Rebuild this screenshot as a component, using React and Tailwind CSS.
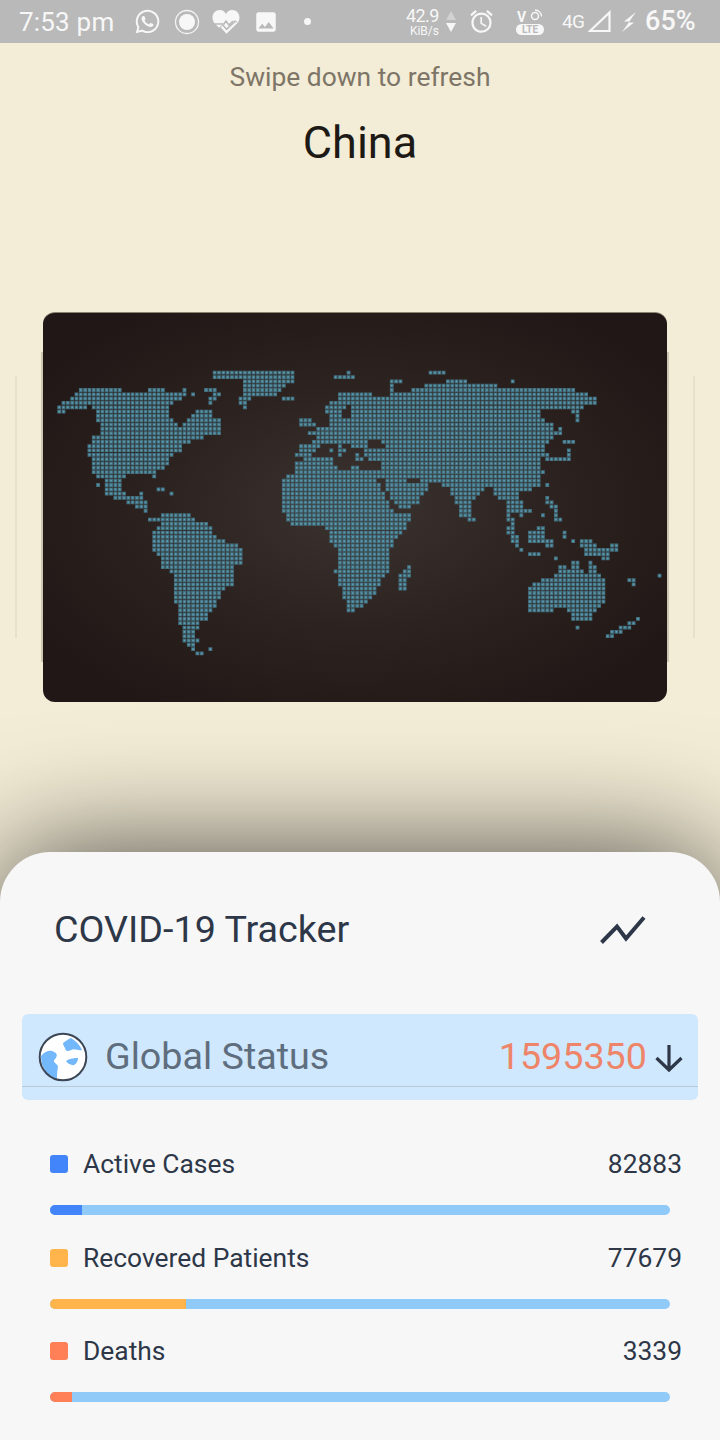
import React from 'react';
import { FaWhatsapp } from 'react-icons/fa';
import { MdImage, MdOutlineAccessAlarm } from 'react-icons/md';

const PITCH = 4.33;
const GRID_X = 210;
const GRID_Y = 649;

// outlines traced from crops: [crop x, crop y, points at 3x]
const LAND = [
  // north america
  [0, 300, '175,310 200,295 240,265 355,265 365,270 435,270 460,265 475,255 495,255 500,270 545,270 555,265 560,290 520,305 500,320 500,330 525,370 545,380 550,360 570,350 590,320 610,320 640,335 640,350 660,360 660,405 640,405 610,400 610,420 560,425 545,445 505,480 495,510 470,515 470,535 455,535 455,515 430,525 375,525 360,570 405,590 415,570 430,565 430,590 445,610 445,645 395,612 345,595 320,590 305,535 280,530 275,510 265,465 255,455 265,440 275,410 295,400 290,325 260,318 235,325 200,330 175,345'],
  // central and south america
  [0, 500, '445,45 455,55 490,40 570,40 590,60 625,70 650,110 680,125 715,132 730,150 725,185 705,200 705,250 665,270 650,320 630,335 625,350 595,375 585,400 595,425 580,445 610,455 610,467 590,467 550,425 550,380 535,370 535,320 520,300 520,225 485,200 475,175 458,150 458,95 480,70 445,65 430,45'],
  // greenland
  [0, 300, '640,215 665,205 725,210 805,205 880,205 880,240 855,260 830,280 780,290 750,290 745,315 735,330 720,315 720,285 730,270 725,240 680,235 645,238'],
  [0, 300, '600,258 635,258 660,270 660,292 637,300 637,316 620,316 615,295 640,285 630,270 600,266'],
  // eurasia, west half
  [270, 370, '80,240 90,215 115,215 120,225 140,195 115,195 115,185 140,175 180,160 180,130 165,120 165,100 190,95 215,60 305,60 315,75 330,72 395,68 395,58 420,58 430,45 450,48 495,40 530,35 535,20 585,20 590,40 630,42 685,45 690,55 730,55 730,45 760,45 765,55 920,55 925,70 960,70 960,80 985,85 970,105 945,108 945,120 900,122 820,122 820,148 845,150 850,165 880,175 880,195 855,195 845,215 818,240 815,290 830,310 815,320 815,340 785,360 750,370 765,420 780,425 760,430 735,425 720,420 705,395 680,385 665,355 640,355 615,380 600,395 600,440 575,440 565,410 550,375 530,345 475,340 465,370 445,395 405,415 385,415 360,385 345,345 335,315 332,272 280,262 280,235 270,235 250,240 235,218 190,215 140,232 125,262 85,262 75,245'],
  // africa
  [270, 370, '75,280 100,265 185,265 190,280 215,300 240,290 265,290 275,300 330,300 330,345 360,405 385,430 430,432 420,455 370,520 360,555 365,600 340,620 310,680 280,715 230,725 225,690 215,685 205,620 190,605 205,600 200,540 180,520 180,490 150,465 60,465 40,430 25,400 35,395 35,340 50,315 70,310'],
  [270, 370, '385,620 410,590 418,590 418,620 405,630 405,660 385,660'],
  [270, 370, '85,150 115,140 130,150 137,170 85,170'],
  // indonesia, new guinea, australia
  [360, 500, '435,80 460,70 470,100 485,125 483,147 465,140 450,105 435,100'],
  [360, 500, '510,95 550,75 560,110 585,120 587,142 565,140 550,125 510,128'],
  [360, 500, '640,120 655,125 665,118 690,118 715,135 745,155 757,182 730,182 725,165 680,165 678,140 655,135'],
  [360, 500, '510,260 545,240 580,225 605,195 625,205 640,185 665,185 662,210 685,215 692,183 705,185 718,220 730,230 745,265 740,300 710,330 690,362 640,362 640,335 615,325 545,337 510,337'],
];

const HOLES = [
  [270, 370, '215,125 235,95 245,120 250,147 215,147'],
  [270, 370, '290,200 300,212 330,210 357,237 320,227 295,227'],
  [270, 370, '410,305 420,325 447,330 447,342 420,342 405,325'],
  [270, 370, '320,318 335,325 345,360 382,402 360,402 345,375 330,345'],
  [460, 370, '288,173 298,173 298,185 288,185'],
];

// thin islands, snapped to the grid along the line
const STROKES = [
  [270, 370, '36,89 70,89'],
  [270, 370, '205,25 248,25 240,10'],
  [270, 370, '390,38 372,38 372,52'],
  [270, 370, '488,12 518,12'],
  [270, 370, '180,243 180,243'],
  [270, 370, '207,232 220,243 207,257'],
  [270, 370, '258,255 272,268'],
  [0, 300, '850,299 878,299'],
  [0, 300, '1012,235 1058,235 1050,220'],
  [0, 300, '475,568 492,568'],
  [0, 300, '514,582 514,582'],
  [0, 300, '296,557 296,557'],
  [0, 300, '578,285 578,285'],
  [0, 500, '630,447 630,447'],
  [460, 370, '318,218 338,218'],
  [460, 370, '334,240 334,268 305,270'],
  [460, 370, '255,245 268,268 285,270'],
  [460, 370, '335,128 350,125 352,155'],
  [460, 370, '258,347 258,347'],
  [460, 370, '268,382 272,400 283,412 295,425 285,436 300,450'],
  [460, 370, '165,35 165,35'],
  [460, 370, '36,450 36,450'],
  [460, 370, '140,425 150,450 165,465'],
  [460, 370, '180,437 180,437'],
  [460, 370, '205,423 205,423'],
  [360, 500, '490,150 490,150'],
  [360, 500, '515,161 532,161'],
  [360, 500, '555,45 555,45'],
  [360, 500, '619,95 619,112'],
  [360, 500, '645,122 645,122'],
  [360, 500, '748,150 762,135 772,150'],
  [360, 500, '593,175 593,175'],
  [360, 500, '658,380 658,380'],
  [360, 500, '812,238 823,253'],
  [360, 500, '901,227 901,227'],
  [360, 500, '838,354 825,368 798,380 785,393 770,395 750,407'],
  [360, 500, '335,60 335,60'],
];

const toPage = ([ox, oy, pts]) =>
  pts.split(' ').map((p) => {
    const [x, y] = p.split(',').map(Number);
    return [ox + x / 3, oy + y / 3];
  });

const inside = (poly, x, y) => {
  let hit = false;
  for (let i = 0, j = poly.length - 1; i < poly.length; j = i++) {
    const [xi, yi] = poly[i];
    const [xj, yj] = poly[j];
    if (yi > y !== yj > y && x < ((xj - xi) * (y - yi)) / (yj - yi) + xi) hit = !hit;
  }
  return hit;
};

const buildMap = () => {
  const land = LAND.map(toPage);
  const holes = HOLES.map(toPage);
  const cells = new Set();
  for (let i = -40; i < 110; i++) {
    for (let j = -80; j < 5; j++) {
      const x = GRID_X + i * PITCH;
      const y = GRID_Y + j * PITCH;
      if (land.some((p) => inside(p, x, y)) && !holes.some((p) => inside(p, x, y))) {
        cells.add(`${i},${j}`);
      }
    }
  }
  STROKES.map(toPage).forEach((line) => {
    line.forEach(([x, y], n) => {
      const [nx, ny] = line[n + 1] || [x, y];
      for (let t = 0; t <= 1; t += 0.1) {
        const i = Math.round((x + (nx - x) * t - GRID_X) / PITCH);
        const j = Math.round((y + (ny - y) * t - GRID_Y) / PITCH);
        cells.add(`${i},${j}`);
      }
    });
  });
  let base = '';
  let glow = '';
  cells.forEach((key) => {
    const [i, j] = key.split(',').map(Number);
    const x = GRID_X + i * PITCH;
    const y = GRID_Y + j * PITCH;
    base += `M${(x - 1.9).toFixed(2)} ${(y - 1.9).toFixed(2)}h3.8v3.8h-3.8z`;
    glow += `M${(x - 0.8).toFixed(2)} ${(y - 0.8).toFixed(2)}h1.6v1.6h-1.6z`;
  });
  return { base, glow };
};

const mapPaths = buildMap();

const WorldMap = () => (
  <svg viewBox="43 312 624 390" className="absolute inset-0 h-full w-full">
    <path d={mapPaths.base} fill="#44707f" />
    <path d={mapPaths.glow} fill="#5a9fb5" />
  </svg>
);

const RecordIcon = () => (
  <svg width="26" height="26" viewBox="0 0 26 26" className="ml-[13px]">
    <circle cx="13" cy="13" r="11.5" fill="none" stroke="#f4f4f4" strokeWidth="1.3" />
    <circle cx="13" cy="13" r="8" fill="#f7f7f7" />
  </svg>
);

const HeartIcon = () => (
  <svg width="28" height="26" viewBox="0 0 28 26" className="ml-[12px]">
    <path d="M14 25 L3 15 C-2 9 1 1 8 1 C11 1 13 3 14 5 C15 3 17 1 20 1 C27 1 30 9 25 15 Z" fill="#f7f7f7" />
    <path d="M2 15 L12 15 L14 12 L17 16 L21 12" fill="none" stroke="#b9b9b9" strokeWidth="1.500" />
    <path d="M9 17 L14.500 23 L25 13" fill="none" stroke="#b9b9b9" strokeWidth="5.500" />
    <path d="M9.500 17.500 L14.500 23 L24.500 13.500" fill="none" stroke="#f7f7f7" strokeWidth="2.400" />
  </svg>
);

const VoLteIcon = () => (
  <svg width="30" height="28" viewBox="0 0 30 28" className="ml-[20px]">
    <rect x="1" y="16" width="28" height="11" rx="5.500" fill="#f7f7f7" />
    <text x="15" y="25" textAnchor="middle" fontSize="10" fontWeight="700" fontFamily="Roboto, sans-serif" fill="#b9b9b9">LTE</text>
    <text x="2" y="14" fontSize="14" fontWeight="700" fontFamily="Roboto, sans-serif" fill="#f7f7f7">V</text>
    <circle cx="20" cy="8" r="3.500" fill="none" stroke="#f7f7f7" strokeWidth="1.500" />
    <path d="M20 2 A6.500 6.500 0 0 1 26.500 8.500" fill="none" stroke="#f7f7f7" strokeWidth="1.300" />
  </svg>
);

const StatusBar = () => (
  <div className="flex h-[43px] items-center bg-[#b9b9b9] pl-[19px] font-['Roboto',sans-serif] text-[#f7f7f7]">
    <span className="mt-[1px] w-[96px] text-[26px] leading-none tracking-[0.2px] whitespace-nowrap">7:53 pm</span>
    <FaWhatsapp size={27} className="ml-[19px]" />
    <RecordIcon />
    <HeartIcon />
    <MdImage size={26} className="ml-[13px]" />
    <span className="ml-[25px] h-[7px] w-[7px] rounded-full bg-[#f7f7f7]" />
    <div className="ml-[94px] flex w-[34px] flex-col items-end">
      <span className="text-[18px] leading-[18px] tracking-[-0.5px]">42.9</span>
      <span className="text-[12px] leading-[12px]">KiB/s</span>
    </div>
    <div className="ml-[7px] flex flex-col gap-[3px]">
      <span className="h-0 w-0 border-x-[5px] border-b-[9px] border-x-transparent border-b-[#d2d2d2]" />
      <span className="h-0 w-0 border-x-[5px] border-t-[9px] border-x-transparent border-t-[#f7f7f7]" />
    </div>
    <MdOutlineAccessAlarm size={27} className="ml-[12px]" />
    <VoLteIcon />
    <span className="ml-[17px] text-[19px] leading-none tracking-[-0.8px]">4G</span>
    <svg width="24" height="24" viewBox="0 0 24 24" className="ml-[4px]">
      <path d="M2 21 L21.500 2.500 V21 Z" fill="none" stroke="#f7f7f7" strokeWidth="2.200" />
    </svg>
    <svg width="16" height="22" viewBox="0 0 16 22" className="ml-[9px]">
      <path d="M15 1 L3 10.500 H8.500 L1 21 L13 11.500 H7.500 Z" fill="#f7f7f7" />
    </svg>
    <span className="ml-[8px] text-[27px] leading-none font-medium">65%</span>
  </div>
);

const Globe = () => (
  <svg width="50" height="50" viewBox="0 0 50 50">
    <circle cx="25" cy="25" r="23.300" fill="#fff" />
    <path d="M3 24 C8 18 13 18 16 20 C19 21 20 24 17 27 C14 30 18 31 20 34 C19 40 19 44 19 47 C10 45 3 36 3 24 Z" fill="#72b8fb" />
    <path d="M25 11 C28 9 30 7 33 6 C38 9 42 13 44 18 C40 19 37 16 33 18 C30 20 27 19 27 16 C26 14 25 13 25 11 Z" fill="#72b8fb" />
    <path d="M28 29 C32 26 37 26 40 26 C40 30 37 34 34 33 C31 32 29 31 28 29 Z" fill="#72b8fb" />
    <circle cx="25" cy="25" r="23.300" fill="none" stroke="#3d4654" strokeWidth="2" />
  </svg>
);

const stats = [
  { label: 'Active Cases', value: '82883', color: 'bg-[#4285fb]', fill: 'w-[32px]', gap: 'mt-[50px]' },
  { label: 'Recovered Patients', value: '77679', color: 'bg-[#ffb44c]', fill: 'w-[136px]', gap: 'mt-[29px]' },
  { label: 'Deaths', value: '3339', color: 'bg-[#ff7f57]', fill: 'w-[22px]', gap: 'mt-[28px]' },
];

const StatRow = ({ label, value, color, fill, gap }) => (
  <div className={gap}>
    <div className="flex h-[28px] items-center pl-[50px] pr-[38px]">
      <span className={`h-[18px] w-[18px] rounded-[3px] ${color}`} />
      <span className="ml-[15px] flex-1 text-[26.400px] leading-none text-[#2d3748]">{label}</span>
      <span className="text-[26.400px] leading-none text-[#2d3748]">{value}</span>
    </div>
    <div className="mx-[50px] mt-[27px] h-[10px] overflow-hidden rounded-full bg-[#90caf9]">
      <div className={`h-full ${color} ${fill}`} />
    </div>
  </div>
);

const App = () => {
  return (
    <div className="flex h-[1440px] w-[720px] flex-col overflow-hidden bg-[#f3ecd6] font-['Roboto',sans-serif]">
      <StatusBar />
      <p className="mt-[19px] text-center text-[26.400px] leading-[30px] text-[#7d7567]">Swipe down to refresh</p>
      <h1 className="mt-[24px] text-center text-[45px] leading-[54px] text-[#1d1a16]">China</h1>

      <div className="mt-[142px] ml-[15px] flex items-center gap-[26px]">
        <div className="h-[262px] w-[2px] bg-[#e6e0cc]" />
        <div className="relative h-[390px] w-[624px]">
          <div className="absolute -inset-x-[2px] inset-y-[40px] bg-[#cdc6b0]" />
          <div className="absolute inset-0 overflow-hidden rounded-[12px] border-t border-[#8d8270] bg-[radial-gradient(ellipse_at_center,#3b332f_0%,#2c2320_45%,#211716_85%)]">
            <WorldMap />
          </div>
        </div>
        <div className="h-[262px] w-[2px] bg-[#e6e0cc]" />
      </div>

      <div className="mt-[150px] flex-1 rounded-t-[50px] bg-[#f7f7f7] shadow-[0_0_120px_rgba(0,0,0,0.7)]">
        <div className="flex h-[156px] items-center pl-[54px] pr-[74px]">
          <h2 className="flex-1 text-[37.700px] leading-none text-[#2d3748]">COVID-19 Tracker</h2>
          <svg width="46" height="30" viewBox="0 0 46 30">
            <path d="M1.500 27.500 L17 11.500 L26 23.500 L44 2.500" fill="none" stroke="#2d3748" strokeWidth="4" />
          </svg>
        </div>

        <div className="relative mx-[22px] mt-[6px] flex h-[86px] items-center rounded-[6px] bg-[#cfe8fd] pb-[1px] pl-[16px] pr-[14px]">
          <Globe />
          <span className="ml-[17px] flex-1 text-[37.700px] leading-none text-[#5f6e7e]">Global Status</span>
          <span className="text-[37.700px] leading-none text-[#ee8468]">1595350</span>
          <svg width="30" height="30" viewBox="0 0 30 30" className="ml-[7px] mt-[2px]">
            <path d="M15 2 V27 M2.500 15 L15 27 L27.500 15" fill="none" stroke="#2d3748" strokeWidth="3.200" />
          </svg>
          <div className="absolute inset-x-0 bottom-[13px] h-px bg-[#b8cad8]" />
        </div>

        {stats.map((s) => (
          <StatRow key={s.label} {...s} />
        ))}
      </div>
    </div>
  );
};

export default App;
